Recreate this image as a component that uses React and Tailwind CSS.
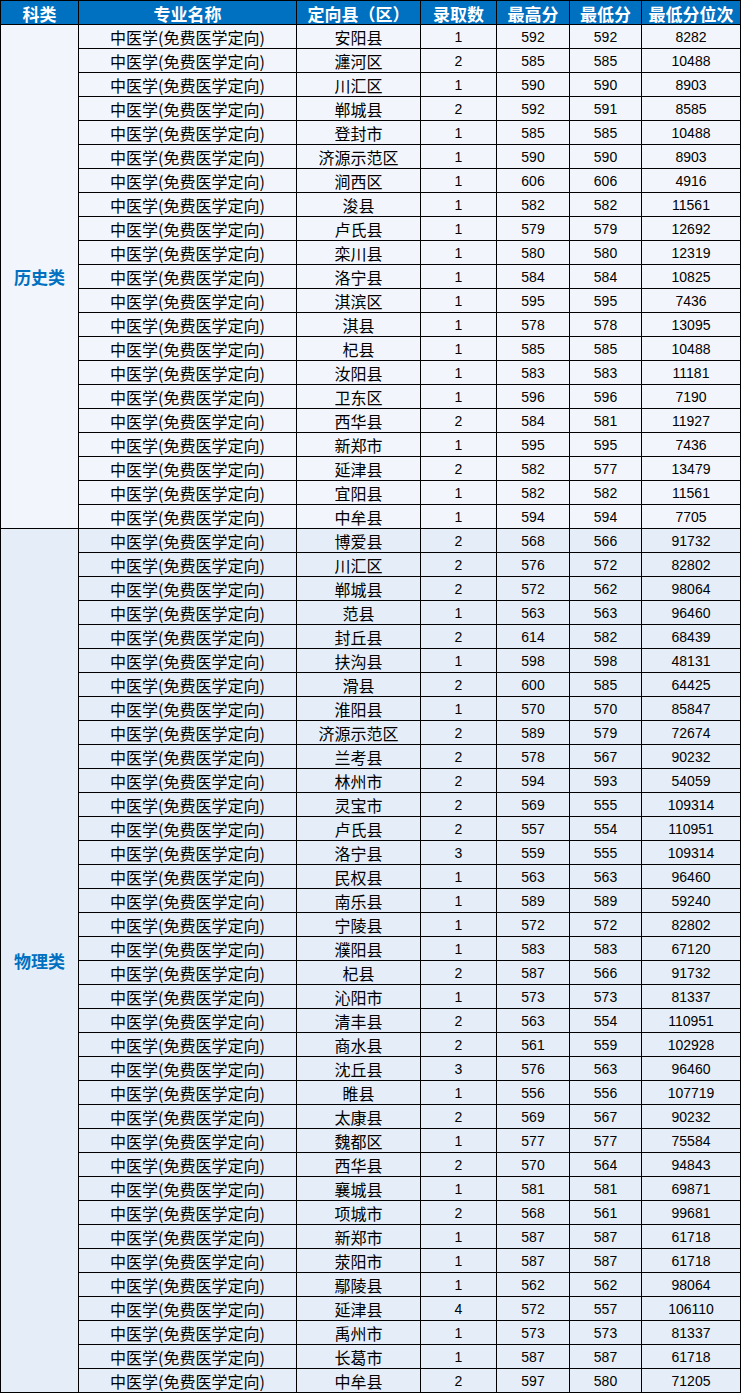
const history = [
  ['安阳县', 1, 592, 592, 8282],
  ['瀍河区', 2, 585, 585, 10488],
  ['川汇区', 1, 590, 590, 8903],
  ['郸城县', 2, 592, 591, 8585],
  ['登封市', 1, 585, 585, 10488],
  ['济源示范区', 1, 590, 590, 8903],
  ['涧西区', 1, 606, 606, 4916],
  ['浚县', 1, 582, 582, 11561],
  ['卢氏县', 1, 579, 579, 12692],
  ['栾川县', 1, 580, 580, 12319],
  ['洛宁县', 1, 584, 584, 10825],
  ['淇滨区', 1, 595, 595, 7436],
  ['淇县', 1, 578, 578, 13095],
  ['杞县', 1, 585, 585, 10488],
  ['汝阳县', 1, 583, 583, 11181],
  ['卫东区', 1, 596, 596, 7190],
  ['西华县', 2, 584, 581, 11927],
  ['新郑市', 1, 595, 595, 7436],
  ['延津县', 2, 582, 577, 13479],
  ['宜阳县', 1, 582, 582, 11561],
  ['中牟县', 1, 594, 594, 7705],
];

const physics = [
  ['博爱县', 2, 568, 566, 91732],
  ['川汇区', 2, 576, 572, 82802],
  ['郸城县', 2, 572, 562, 98064],
  ['范县', 1, 563, 563, 96460],
  ['封丘县', 2, 614, 582, 68439],
  ['扶沟县', 1, 598, 598, 48131],
  ['滑县', 2, 600, 585, 64425],
  ['淮阳县', 1, 570, 570, 85847],
  ['济源示范区', 2, 589, 579, 72674],
  ['兰考县', 2, 578, 567, 90232],
  ['林州市', 2, 594, 593, 54059],
  ['灵宝市', 2, 569, 555, 109314],
  ['卢氏县', 2, 557, 554, 110951],
  ['洛宁县', 3, 559, 555, 109314],
  ['民权县', 1, 563, 563, 96460],
  ['南乐县', 1, 589, 589, 59240],
  ['宁陵县', 1, 572, 572, 82802],
  ['濮阳县', 1, 583, 583, 67120],
  ['杞县', 2, 587, 566, 91732],
  ['沁阳市', 1, 573, 573, 81337],
  ['清丰县', 2, 563, 554, 110951],
  ['商水县', 2, 561, 559, 102928],
  ['沈丘县', 3, 576, 563, 96460],
  ['睢县', 1, 556, 556, 107719],
  ['太康县', 2, 569, 567, 90232],
  ['魏都区', 1, 577, 577, 75584],
  ['西华县', 2, 570, 564, 94843],
  ['襄城县', 1, 581, 581, 69871],
  ['项城市', 2, 568, 561, 99681],
  ['新郑市', 1, 587, 587, 61718],
  ['荥阳市', 1, 587, 587, 61718],
  ['鄢陵县', 1, 562, 562, 98064],
  ['延津县', 4, 572, 557, 106110],
  ['禹州市', 1, 573, 573, 81337],
  ['长葛市', 1, 587, 587, 61718],
  ['中牟县', 2, 597, 580, 71205],
];

const headers = ['科类', '专业名称', '定向县（区）', '录取数', '最高分', '最低分', '最低分位次'];

const cjk = "font-['Noto_Sans_CJK_SC',sans-serif]";
const num = "font-['Liberation_Sans',Arial,sans-serif] text-[14px]";

const Row = ({ row }) => {
  const [county, count, high, low, rank] = row;
  return (
    <div className="grid grid-cols-[218px_124px_76px_73px_72px_99px] h-[24px] border-b border-black text-black">
      <div className={`flex items-center justify-center border-r border-black text-[16px] ${cjk}`}>
        中医学(免费医学定向)
      </div>
      <div className={`flex items-center justify-center border-r border-black text-[16px] ${cjk}`}>
        {county}
      </div>
      <div className={`flex items-center justify-center border-r border-black ${num}`}>{count}</div>
      <div className={`flex items-center justify-center border-r border-black ${num}`}>{high}</div>
      <div className={`flex items-center justify-center border-r border-black ${num}`}>{low}</div>
      <div className={`flex items-center justify-center border-r border-black ${num}`}>{rank}</div>
    </div>
  );
};

const Section = ({ label, rows, bg }) => (
  <div className={`flex ${bg}`}>
    <div
      className={`w-[78px] shrink-0 flex items-center justify-center border-r border-b border-black text-[#0070c0] font-bold text-[17px] ${cjk}`}
    >
      {label}
    </div>
    <div className="flex-1">
      {rows.map((r, i) => (
        <Row key={`${label}-${i}`} row={r} />
      ))}
    </div>
  </div>
);

export default function App() {
  return (
    <div className="w-[741px] bg-white">
      <div className="border-l border-t border-black">
        <div className="grid grid-cols-[78px_218px_124px_76px_73px_72px_99px] h-[24px] bg-[#0070c0] border-b border-black">
          {headers.map((h) => (
            <div
              key={h}
              className={`flex items-center justify-center border-r border-black text-white font-bold text-[17px] ${cjk}`}
            >
              {h}
            </div>
          ))}
        </div>
        <Section label="历史类" rows={history} bg="bg-[#f2f6fc]" />
        <Section label="物理类" rows={physics} bg="bg-[#e5eef8]" />
      </div>
    </div>
  );
}
